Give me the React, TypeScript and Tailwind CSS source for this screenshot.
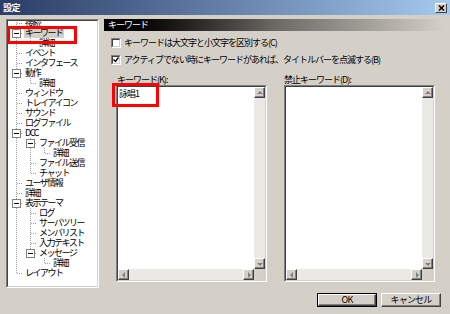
import React from "react";

type Node = { t: string; l: number; exp?: boolean; sel?: boolean };

const nodes: Node[] = [
  { t: "接続", l: 0 },
  { t: "キーワード", l: 0, exp: true, sel: true },
  { t: "詳細", l: 1 },
  { t: "イベント", l: 0 },
  { t: "インタフェース", l: 0 },
  { t: "動作", l: 0, exp: true },
  { t: "詳細", l: 1 },
  { t: "ウィンドウ", l: 0 },
  { t: "トレイアイコン", l: 0 },
  { t: "サウンド", l: 0 },
  { t: "ログファイル", l: 0 },
  { t: "DCC", l: 0, exp: true },
  { t: "ファイル受信", l: 1, exp: true },
  { t: "詳細", l: 2 },
  { t: "ファイル送信", l: 1 },
  { t: "チャット", l: 1 },
  { t: "ユーザ情報", l: 0 },
  { t: "詳細", l: 0 },
  { t: "表示テーマ", l: 0, exp: true },
  { t: "ログ", l: 1 },
  { t: "サーバツリー", l: 1 },
  { t: "メンバリスト", l: 1 },
  { t: "入力テキスト", l: 1 },
  { t: "メッセージ", l: 1, exp: true },
  { t: "詳細", l: 2 },
  { t: "レイアウト", l: 0 },
];

// does the node at index i have a later sibling on the same level?
function hasNext(lvl: number, i: number) {
  for (let j = i + 1; j < nodes.length; j++) {
    if (nodes[j].l < lvl) return false;
    if (nodes[j].l === lvl) return true;
  }
  return false;
}

const rows = nodes.map((n, i) => {
  const guides: boolean[] = [];
  for (let k = 0; k < n.l; k++) {
    let a = i;
    while (a >= 0 && nodes[a].l !== k) a--;
    guides.push(hasNext(k, a));
  }
  return { ...n, guides, last: !hasNext(n.l, i) };
});

const LINE = "#a0a0a0";

function Guide({ line }: { line: boolean }) {
  return (
    <svg width="14" height="10" className="shrink-0">
      {line && <line x1="7.5" y1="0" x2="7.5" y2="10" stroke={LINE} strokeDasharray="1 1" />}
    </svg>
  );
}

function Connector({ last, exp }: { last: boolean; exp?: boolean }) {
  return (
    <svg width="14" height="10" className="shrink-0">
      <line x1="7.5" y1="0" x2="7.5" y2={last ? 5 : 10} stroke={LINE} strokeDasharray="1 1" />
      <line x1="8" y1="5.5" x2="14" y2="5.5" stroke={LINE} strokeDasharray="1 1" />
      {exp && (
        <>
          <rect x="3.5" y="1.5" width="8" height="8" fill="#fff" stroke="#808080" />
          <line x1="5" y1="5.5" x2="10" y2="5.5" stroke="#000" />
        </>
      )}
    </svg>
  );
}

function Arrow({ dir }: { dir: "up" | "down" | "left" | "right" }) {
  const pts = {
    up: "1,5 7,5 4,2",
    down: "1,3 7,3 4,6",
    left: "5,1 5,7 2,4",
    right: "3,1 3,7 6,4",
  }[dir];
  return (
    <svg width="8" height="8">
      <polygon points={pts} fill="#808080" />
    </svg>
  );
}

function ScrollBtn({ dir }: { dir: "up" | "down" | "left" | "right" }) {
  return (
    <div className="w-[11px] h-[11px] shrink-0 flex items-center justify-center bg-[#d4d0c8] border border-t-white border-l-white border-r-[#404040] border-b-[#404040] shadow-[inset_-1px_-1px_0_#808080]">
      <Arrow dir={dir} />
    </div>
  );
}

function ListBox({ children }: { children?: React.ReactNode }) {
  return (
    <div className="w-[151px] h-[197px] border border-t-[#808080] border-l-[#808080] border-r-white border-b-white">
      <div className="h-full border border-t-[#404040] border-l-[#404040] border-r-[#d4d0c8] border-b-[#d4d0c8] flex flex-col bg-white">
        <div className="flex-1 flex min-h-0">
          <div className="flex-1 pl-[1px] pt-[2px] text-[9px] leading-[10px] tracking-[-1px]">{children}</div>
          <div className="w-[11px] flex flex-col bg-[#ebe9e6]">
            <ScrollBtn dir="up" />
            <div className="flex-1" />
            <ScrollBtn dir="down" />
          </div>
        </div>
        <div className="h-[11px] flex bg-[#ebe9e6]">
          <ScrollBtn dir="left" />
          <div className="flex-1" />
          <ScrollBtn dir="right" />
          <div className="w-[11px] bg-[#d4d0c8]" />
        </div>
      </div>
    </div>
  );
}

function CheckBox({ checked }: { checked?: boolean }) {
  return (
    <div className="w-[10px] h-[10px] shrink-0 border border-t-[#808080] border-l-[#808080] border-r-white border-b-white">
      <div className="w-full h-full bg-white border border-t-[#404040] border-l-[#404040] border-r-[#d4d0c8] border-b-[#d4d0c8] flex items-center justify-center">
        {checked && (
          <svg width="6" height="6">
            <polyline points="0.5,2.5 2.5,4.5 5.5,0.5" fill="none" stroke="#000" strokeWidth="1.3" />
          </svg>
        )}
      </div>
    </div>
  );
}

function Button({ label, def }: { label: string; def?: boolean }) {
  return (
    <div className={`w-[60px] h-[14px] ${def ? "border border-black" : ""}`}>
      <div className="w-full h-full flex items-center justify-center bg-[#d4d0c8] border border-t-white border-l-white border-r-[#404040] border-b-[#404040] shadow-[inset_-1px_-1px_0_#808080] text-[9px] tracking-[-0.8px]">
        {label}
      </div>
    </div>
  );
}

export default function App() {
  return (
    <div
      className="w-[450px] h-[314px] bg-[#d4d0c8] flex flex-col overflow-hidden text-black"
      style={{ fontFamily: '"Noto Sans CJK JP", "Noto Sans", sans-serif' }}
    >
      {/* Title bar */}
      <div className="h-[15px] shrink-0 flex items-center justify-between bg-gradient-to-r from-[#2a3d66] to-[#a6caf0]">
        <span className="pl-[3px] text-white font-bold text-[9px] leading-none tracking-[-0.5px]">設定</span>
        <div className="mr-[3px] w-[12px] h-[10px] flex items-center justify-center bg-[#d4d0c8] border border-t-white border-l-white border-r-[#404040] border-b-[#404040]">
          <svg width="7" height="6">
            <path d="M1 0.5 L6 5.5 M6 0.5 L1 5.5" stroke="#000" strokeWidth="1.5" />
          </svg>
        </div>
      </div>

      <div className="flex-1 flex pt-[4px] pl-[6px] gap-[5px]">
        {/* Tree */}
        <div className="relative w-[93px] h-[269px] shrink-0">
          <div className="w-full h-full border border-t-[#808080] border-l-[#808080] border-r-white border-b-white">
            <div className="w-full h-full overflow-hidden bg-white border border-t-[#404040] border-l-[#404040] border-r-[#d4d0c8] border-b-[#d4d0c8]">
              <div className="-mt-[3px] text-[9px] tracking-[-1.5px]">
                {rows.map((r, i) => (
                  <div key={i} className="flex h-[10px] items-center pl-[1px]">
                    {r.guides.map((g, k) => (
                      <Guide key={k} line={g} />
                    ))}
                    <Connector last={r.last} exp={r.exp} />
                    <span
                      className={`ml-[1px] px-[1px] leading-[10px] whitespace-nowrap ${r.sel ? "bg-[#d4d0c8]" : ""}`}
                    >
                      {r.t}
                    </span>
                  </div>
                ))}
              </div>
            </div>
          </div>
          <div className="absolute left-[1px] top-[7px] w-[70px] h-[18px] border-[3px] border-[#ff0000]" />
        </div>

        {/* Right side */}
        <div className="w-[340px] flex flex-col">
          <div className="h-[12px] flex items-center pl-[4px] bg-gradient-to-r from-black via-[#6a6864] to-[#d4d0c8] text-white text-[9px] tracking-[-1px]">
            キーワード
          </div>

          <div className="mt-[7px] pl-[7px] flex items-center gap-[3px] h-[10px] text-[9px] tracking-[-1px] whitespace-nowrap">
            <CheckBox />
            <span>キーワードは大文字と小文字を区別する(C)</span>
          </div>
          <div className="mt-[7px] pl-[7px] flex items-center gap-[3px] h-[10px] text-[9px] tracking-[-1px] whitespace-nowrap">
            <CheckBox checked />
            <span>アクティブでない時にキーワードがあれば、タイトルバーを点滅する(B)</span>
          </div>

          <div className="mt-[9px] pl-[12px] flex gap-[17px]">
            <div className="flex flex-col">
              <div className="h-[11px] pl-[1px] text-[9px] leading-[11px] tracking-[-1px]">キーワード(K):</div>
              <div className="relative">
                <ListBox>詠唱1</ListBox>
                <div className="absolute left-[-4px] top-[-2px] w-[47px] h-[24px] border-[3px] border-[#ff0000]" />
              </div>
            </div>
            <div className="flex flex-col">
              <div className="h-[11px] text-[9px] leading-[11px] tracking-[-1px]">禁止キーワード(D):</div>
              <ListBox />
            </div>
          </div>

          <div className="mt-[11px] flex justify-end gap-[4px] pr-[3px]">
            <Button label="OK" def />
            <Button label="キャンセル" />
          </div>
        </div>
      </div>
    </div>
  );
}
